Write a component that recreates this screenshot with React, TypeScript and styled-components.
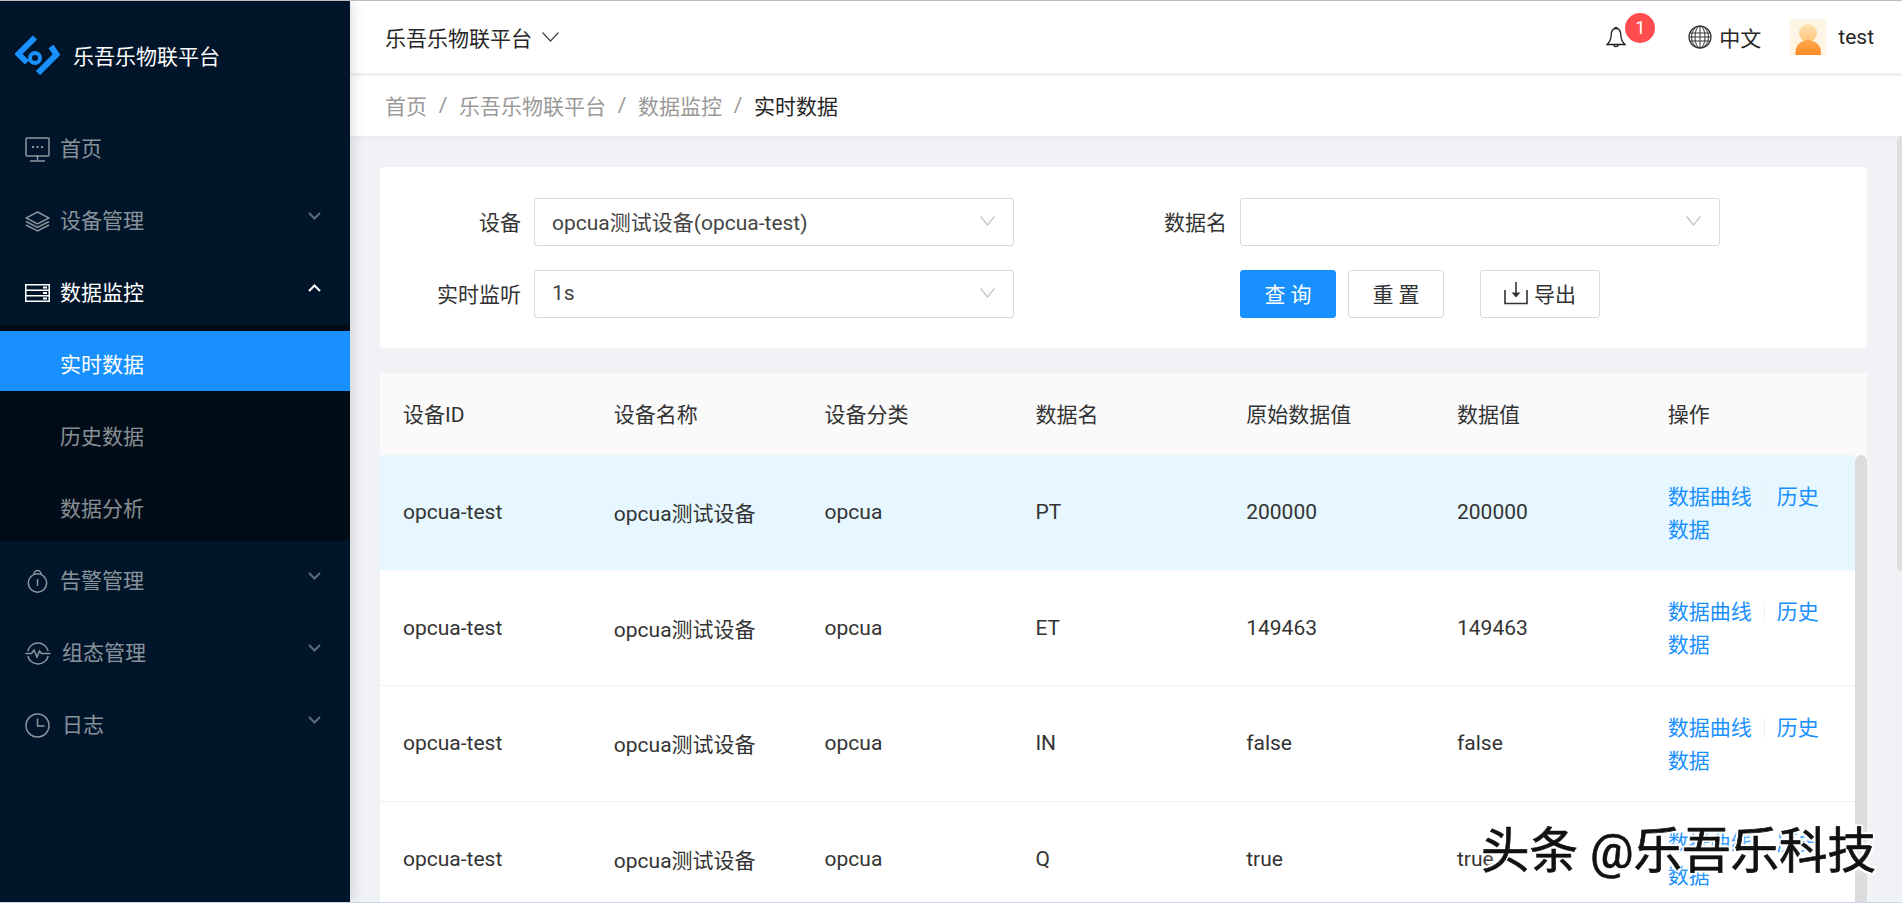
import React from "react";
import styled, { createGlobalStyle } from "styled-components";

const GlobalStyle = createGlobalStyle`
  html, body {
    margin: 0;
    padding: 0;
    background: #f0f2f5;
    font-family: Roboto, "Noto Sans CJK SC", sans-serif;
    font-size: 21px;
    color: #333;
  }
  * {
    box-sizing: border-box;
  }
`;

const Page = styled.div`
  position: relative;
  display: flex;
  width: 1902px;
  height: 903px;
  overflow: hidden;
  border-top: 1px solid #bdbdbd;
  border-bottom: 1px solid #c9d6ea;
`;

const Sidebar = styled.aside`
  position: relative;
  z-index: 2;
  flex: 0 0 350px;
  background: #001529;
  box-shadow: 2px 0 12px rgba(0, 0, 0, 0.14);
  color: rgba(255, 255, 255, 0.55);
`;

const Brand = styled.div`
  display: flex;
  align-items: center;
  gap: 13px;
  height: 112px;
  padding: 0 0 4px 15px;
  color: #fff;
`;

const NavItem = styled.div<{ $active?: boolean; $open?: boolean }>`
  display: flex;
  align-items: center;
  height: ${(p) => (p.$open ? "68px" : "72px")};
  padding: ${(p) => (p.$open ? "4px" : "0")} 29px 0 25px;
  color: ${(p) => (p.$active ? "#fff" : "inherit")};
`;

const NavIcon = styled.span`
  display: flex;
  justify-content: flex-start;
  align-items: center;
  flex: 0 0 35px;
`;

const NavLabel = styled.span<{ $shift?: boolean }>`
  flex: 1;
  padding-bottom: 4px;
  margin-left: ${(p) => (p.$shift ? "2px" : "0")};
`;

const Caret = styled.svg`
  margin-top: -10px;
`;

const SubMenu = styled.div`
  display: flex;
  flex-direction: column;
  gap: 12px;
  padding: 6px 0;
  margin-bottom: 4px;
  background: #000c17;
`;

const SubItem = styled.div<{ $active?: boolean }>`
  display: flex;
  align-items: center;
  height: 60px;
  padding: 4px 0 0 60px;
  background: ${(p) => (p.$active ? "#1890ff" : "transparent")};
  color: ${(p) => (p.$active ? "#fff" : "inherit")};
`;

const Main = styled.main`
  flex: 1;
  min-width: 0;
  display: flex;
  flex-direction: column;
`;

const TopBar = styled.header`
  display: flex;
  align-items: center;
  justify-content: space-between;
  flex: 0 0 72px;
  padding: 0 28px 0 35px;
  background: #fff;
`;

const Project = styled.div`
  display: flex;
  align-items: center;
  gap: 10px;
  color: #262626;
`;

const TopActions = styled.div`
  display: flex;
  align-items: center;
  color: #262626;
`;

const BellWrap = styled.div`
  position: relative;
  display: flex;
  margin-right: 62px;
`;

const Badge = styled.span`
  position: absolute;
  left: 19px;
  top: -12px;
  width: 30px;
  height: 30px;
  border-radius: 50%;
  background: #ff4d4f;
  color: #fff;
  font-size: 18px;
  line-height: 30px;
  text-align: center;
`;

const Lang = styled.div`
  display: flex;
  align-items: center;
  gap: 7px;
  margin-right: 29px;
`;

const UserName = styled.span`
  margin-left: 12px;
`;

const Crumbs = styled.nav`
  display: flex;
  align-items: center;
  flex: 0 0 60px;
  margin-top: 3px;
  padding: 0 0 3px 35px;
  background: #fff;
  color: #999;
  box-shadow: 0 2px 8px rgba(0, 0, 0, 0.03);
`;

const CrumbSep = styled.span`
  width: 32px;
  text-align: center;
`;

const CrumbNow = styled.span`
  color: #262626;
`;

const ContentRow = styled.div`
  flex: 1;
  min-height: 0;
  display: flex;
`;

const Content = styled.div`
  flex: 1;
  min-width: 0;
  padding: 31px 30px 0;
  overflow: hidden;
`;

const PageThumb = styled.div`
  flex: 0 0 5px;
  height: 436px;
  background: #dedede;
  border-radius: 5px 0 0 5px;
`;

const FilterCard = styled.section`
  display: grid;
  grid-template-columns: 154px 480px 226px 480px;
  grid-auto-rows: 48px;
  row-gap: 24px;
  height: 181px;
  padding-top: 31px;
  background: #fff;
  border-radius: 3px;
`;

const FieldLabel = styled.label`
  align-self: center;
  padding: 0 13px 2px 0;
  text-align: right;
  color: #333;
`;

const SelectBox = styled.div`
  display: flex;
  align-items: center;
  justify-content: space-between;
  height: 48px;
  padding: 0 18px 2px 17px;
  background: #fff;
  border: 1px solid #d9d9d9;
  border-radius: 3px;
  color: #444;
`;

const Actions = styled.div`
  display: flex;
`;

const Button = styled.button<{ $primary?: boolean; $wide?: boolean }>`
  display: flex;
  align-items: center;
  justify-content: center;
  gap: 6px;
  width: ${(p) => (p.$wide ? "120px" : "96px")};
  height: 48px;
  margin-right: ${(p) => (p.$wide ? "0" : "12px")};
  margin-left: ${(p) => (p.$wide ? "24px" : "0")};
  padding: 0 0 2px;
  font: inherit;
  background: ${(p) => (p.$primary ? "#1890ff" : "#fff")};
  border: 1px solid ${(p) => (p.$primary ? "#1890ff" : "#d9d9d9")};
  border-radius: 3px;
  color: ${(p) => (p.$primary ? "#fff" : "#333")};
`;

const TableCard = styled.section`
  margin-top: 25px;
  background: #fff;
`;

const TableHead = styled.div`
  display: grid;
  grid-template-columns: repeat(7, 210.8px);
  align-items: center;
  height: 82px;
  padding-bottom: 2px;
  background: #fafafa;
  color: #333;
`;

const Cell = styled.div`
  padding-left: 23px;
`;

const TableBody = styled.div`
  display: flex;
`;

const Rows = styled.div`
  flex: 1;
  min-width: 0;
`;

const Row = styled.div<{ $highlight?: boolean }>`
  display: grid;
  grid-template-columns: repeat(6, 210.8px) 1fr;
  align-items: center;
  height: 115.5px;
  background: ${(p) => (p.$highlight ? "#e6f7ff" : "#fff")};
  border-bottom: 1px solid ${(p) => (p.$highlight ? "#f3fafd" : "#f0f0f0")};
  color: #333;
`;

const LinkCell = styled.div`
  padding: 3px 22px 0 23px;
  line-height: 33px;
  color: #1890ff;
`;

const LinkSep = styled.span`
  display: inline-block;
  width: 1px;
  height: 20px;
  margin: 0 12px;
  background: #eef1f3;
  vertical-align: -3px;
`;

const TableThumb = styled.div`
  flex: 0 0 12px;
  background: #dcdcdc;
  border-radius: 6px 6px 0 0;
`;

const Watermark = styled.div`
  position: absolute;
  z-index: 3;
  top: 816px;
  left: 1481px;
  font-size: 48.5px;
  line-height: 70px;
  white-space: nowrap;
  color: #111;
  -webkit-text-stroke: 0.7px #111;
  text-shadow:
    -2px -2px 0 #fff,
    2px 2px 0 #fff,
    -2px 2px 0 #fff,
    2px -2px 0 #fff,
    0 0 8px #fff;
`;

const MenuChevron = ({ up, color }: { up?: boolean; color: string }) => (
  <Caret width="13" height="8" viewBox="0 0 13 8" fill="none">
    <path
      d={up ? "M1 7L6.5 1.5L12 7" : "M1 1L6.5 6.5L12 1"}
      stroke={color}
      strokeWidth="2"
    />
  </Caret>
);

const DownLine = ({ w, h, color }: { w: number; h: number; color: string }) => (
  <svg width={w} height={h} viewBox={`0 0 ${w} ${h}`} fill="none">
    <path d={`M0.5 0.5L${w / 2} ${h - 1}L${w - 0.5} 0.5`} stroke={color} strokeWidth="1.2" />
  </svg>
);

const Logo = () => (
  <svg width="45" height="40" viewBox="0 0 45 40" fill="none" stroke="#1890ff">
    <path d="M20 2.5L3.5 19L12 27.5" strokeWidth="6" />
    <path d="M36 11.5L41.5 19.5L23 38" strokeWidth="6" />
    <circle cx="20" cy="23" r="5" strokeWidth="4" />
  </svg>
);

const MonitorIcon = () => (
  <svg width="25" height="25" viewBox="0 0 25 25" fill="none" stroke="currentColor" strokeWidth="1.5">
    <rect x="1" y="1" width="23" height="18" rx="1" />
    <path d="M12.5 19V24M5 24H20" />
    <path d="M7 10h2M11.5 10h2M16 10h2" strokeWidth="2" />
  </svg>
);

const LayersIcon = () => (
  <svg width="25" height="21" viewBox="0 0 25 21" fill="none" stroke="currentColor" strokeWidth="1.5">
    <path d="M12.5 1L24 7L12.5 13L1 7Z" />
    <path d="M1 10.5L12.5 16.5L24 10.5" />
    <path d="M1 14L12.5 20L24 14" />
  </svg>
);

const ServerIcon = () => (
  <svg width="25" height="18" viewBox="0 0 25 18" fill="none" stroke="currentColor" strokeWidth="1.5">
    <rect x="0.75" y="0.75" width="23.5" height="16.5" />
    <path d="M1 6.2H24M1 11.8H24" />
    <path d="M18 3.4H22M18 9H22M18 14.6H22" strokeWidth="2" />
  </svg>
);

const AlarmIcon = () => (
  <svg width="25" height="24" viewBox="0 0 25 24" fill="none" stroke="currentColor" strokeWidth="1.5">
    <circle cx="12.5" cy="14" r="9.2" />
    <path d="M9 5a3.5 3.5 0 0 1 7 0" />
    <path d="M12.5 10V17" />
  </svg>
);

const ActivityIcon = () => (
  <svg width="26" height="23" viewBox="0 0 26 23" fill="none" stroke="currentColor" strokeWidth="1.5">
    <path d="M2.8 9A10.5 10.5 0 0 1 23.2 9" />
    <path d="M2.8 14A10.5 10.5 0 0 0 23.2 14" />
    <path d="M0.5 11.5H6.5L9 8L12 15L14.5 9L16.5 11.5H25.5" />
  </svg>
);

const ClockIcon = () => (
  <svg width="25" height="25" viewBox="0 0 25 25" fill="none" stroke="currentColor" strokeWidth="1.5">
    <circle cx="12.5" cy="12.5" r="11.5" />
    <path d="M12.5 5.5V13H19.5" />
  </svg>
);

const BellIcon = () => (
  <svg width="20" height="24" viewBox="0 0 20 24" fill="none" stroke="#222" strokeWidth="1.3">
    <path d="M10 3.5C6.5 3.5 5.3 6.5 5.2 10C5 14 4 17 1 19.5H19C16 17 15 14 14.8 10C14.7 6.5 13.5 3.5 10 3.5Z" />
    <path d="M8.3 3.6a1.8 1.8 0 0 1 3.4 0" />
    <path d="M7.5 19.7a2.6 2.6 0 0 0 5 0" />
  </svg>
);

const GlobeIcon = () => (
  <svg width="24" height="24" viewBox="0 0 24 24" fill="none" stroke="#333" strokeWidth="1">
    <circle cx="12" cy="12" r="11" strokeWidth="1.2" />
    <ellipse cx="12" cy="12" rx="5" ry="11" />
    <ellipse cx="12" cy="12" rx="8.5" ry="11" />
    <path d="M12 1V23M1.5 8H22.5M1 12H23M1.5 16H22.5" />
  </svg>
);

const Avatar = () => (
  <svg width="36" height="36" viewBox="0 0 36 36">
    <defs>
      <linearGradient id="avatarHead" x1="0" y1="0" x2="0" y2="1">
        <stop offset="0" stopColor="#ffe3ae" />
        <stop offset="1" stopColor="#ffc67e" />
      </linearGradient>
      <linearGradient id="avatarBody" x1="0" y1="0" x2="0" y2="1">
        <stop offset="0" stopColor="#ffab52" />
        <stop offset="1" stopColor="#ff8a1f" />
      </linearGradient>
    </defs>
    <rect width="36" height="36" fill="#fef5e4" />
    <circle cx="18" cy="14" r="9" fill="url(#avatarHead)" />
    <path d="M5.5 36V33C5.5 26 11 21 18 21S31 26 31 33V36Z" fill="url(#avatarBody)" />
  </svg>
);

const ExportIcon = () => (
  <svg width="24" height="23" viewBox="0 0 24 23" fill="none" stroke="#333" strokeWidth="1.6">
    <path d="M1 8V21.5H23V8" />
    <path d="M12 0V13" />
    <path d="M7.5 10.5H16.5L12 15.5Z" fill="#333" stroke="none" />
  </svg>
);

const menuTop = [
  { label: "首页", icon: <MonitorIcon /> },
  { label: "设备管理", icon: <LayersIcon />, caret: true },
];

const menuBottom = [
  { label: "告警管理", icon: <AlarmIcon />, caret: true },
  { label: "组态管理", icon: <ActivityIcon />, caret: true, shift: true },
  { label: "日志", icon: <ClockIcon />, caret: true, shift: true },
];

const columns = ["设备ID", "设备名称", "设备分类", "数据名", "原始数据值", "数据值", "操作"];

const rows = [
  { name: "PT", raw: "200000", value: "200000" },
  { name: "ET", raw: "149463", value: "149463" },
  { name: "IN", raw: "false", value: "false" },
  { name: "Q", raw: "true", value: "true" },
];

export default function App() {
  return (
    <Page>
      <GlobalStyle />
      <Sidebar>
        <Brand>
          <Logo />
          <span>乐吾乐物联平台</span>
        </Brand>
        {menuTop.map((m) => (
          <NavItem key={m.label}>
            <NavIcon>{m.icon}</NavIcon>
            <NavLabel>{m.label}</NavLabel>
            {m.caret && <MenuChevron color="#5d6b7a" />}
          </NavItem>
        ))}
        <NavItem $active $open>
          <NavIcon>
            <ServerIcon />
          </NavIcon>
          <NavLabel>数据监控</NavLabel>
          <MenuChevron up color="#fff" />
        </NavItem>
        <SubMenu>
          <SubItem $active>实时数据</SubItem>
          <SubItem>历史数据</SubItem>
          <SubItem>数据分析</SubItem>
        </SubMenu>
        {menuBottom.map((m) => (
          <NavItem key={m.label}>
            <NavIcon>{m.icon}</NavIcon>
            <NavLabel $shift={m.shift}>{m.label}</NavLabel>
            <MenuChevron color="#5d6b7a" />
          </NavItem>
        ))}
      </Sidebar>
      <Main>
        <TopBar>
          <Project>
            乐吾乐物联平台
            <DownLine w={17} h={10} color="#444" />
          </Project>
          <TopActions>
            <BellWrap>
              <BellIcon />
              <Badge>1</Badge>
            </BellWrap>
            <Lang>
              <GlobeIcon />
              中文
            </Lang>
            <Avatar />
            <UserName>test</UserName>
          </TopActions>
        </TopBar>
        <Crumbs>
          首页
          <CrumbSep>/</CrumbSep>
          乐吾乐物联平台
          <CrumbSep>/</CrumbSep>
          数据监控
          <CrumbSep>/</CrumbSep>
          <CrumbNow>实时数据</CrumbNow>
        </Crumbs>
        <ContentRow>
          <Content>
            <FilterCard>
              <FieldLabel>设备</FieldLabel>
              <SelectBox>
                opcua测试设备(opcua-test)
                <DownLine w={15} h={10} color="#c4c4c4" />
              </SelectBox>
              <FieldLabel>数据名</FieldLabel>
              <SelectBox>
                <span />
                <DownLine w={15} h={10} color="#c4c4c4" />
              </SelectBox>
              <FieldLabel>实时监听</FieldLabel>
              <SelectBox>
                1s
                <DownLine w={15} h={10} color="#c4c4c4" />
              </SelectBox>
              <span />
              <Actions>
                <Button $primary>查 询</Button>
                <Button>重 置</Button>
                <Button $wide>
                  <ExportIcon />
                  导出
                </Button>
              </Actions>
            </FilterCard>
            <TableCard>
              <TableHead>
                {columns.map((c) => (
                  <Cell key={c}>{c}</Cell>
                ))}
              </TableHead>
              <TableBody>
                <Rows>
                  {rows.map((r, i) => (
                    <Row key={r.name} $highlight={i === 0}>
                      <Cell>opcua-test</Cell>
                      <Cell>opcua测试设备</Cell>
                      <Cell>opcua</Cell>
                      <Cell>{r.name}</Cell>
                      <Cell>{r.raw}</Cell>
                      <Cell>{r.value}</Cell>
                      <LinkCell>
                        数据曲线
                        <LinkSep />
                        历史数据
                      </LinkCell>
                    </Row>
                  ))}
                </Rows>
                <TableThumb />
              </TableBody>
            </TableCard>
          </Content>
          <PageThumb />
        </ContentRow>
      </Main>
      <Watermark>头条 @乐吾乐科技</Watermark>
    </Page>
  );
}
